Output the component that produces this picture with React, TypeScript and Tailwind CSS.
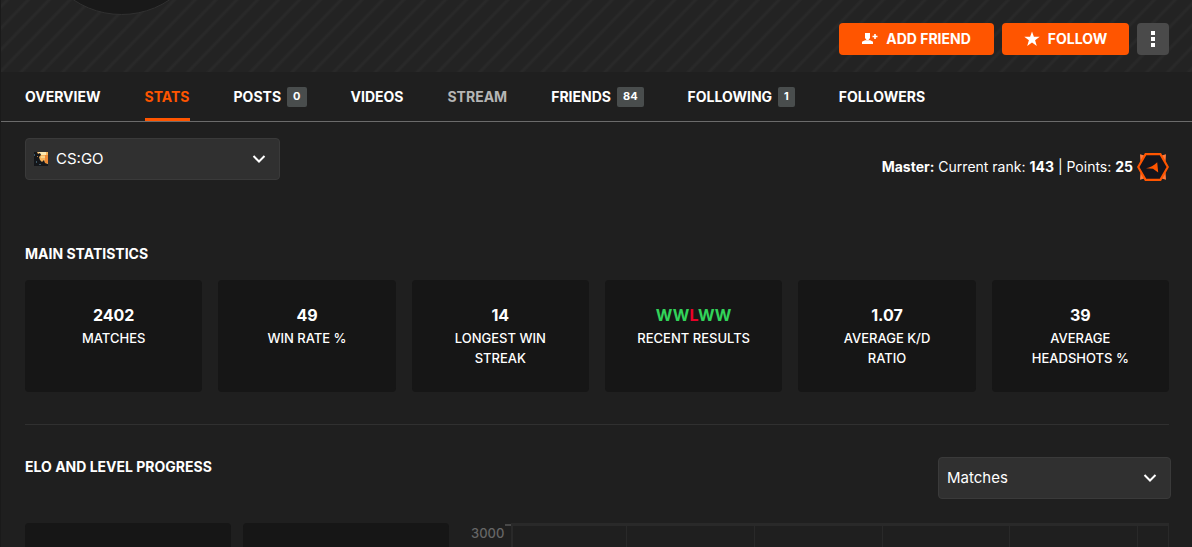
import React from "react";

type Tab = { label: string; count?: number; active?: boolean; muted?: boolean };

const tabs: Tab[] = [
  { label: "OVERVIEW" },
  { label: "STATS", active: true },
  { label: "POSTS", count: 0 },
  { label: "VIDEOS" },
  { label: "STREAM", muted: true },
  { label: "FRIENDS", count: 84 },
  { label: "FOLLOWING", count: 1 },
  { label: "FOLLOWERS" },
];

const stats: { value: string; label: string }[] = [
  { value: "2402", label: "MATCHES" },
  { value: "49", label: "WIN RATE %" },
  { value: "14", label: "LONGEST WIN STREAK" },
  { value: "WWLWW", label: "RECENT RESULTS" },
  { value: "1.07", label: "AVERAGE K/D RATIO" },
  { value: "39", label: "AVERAGE HEADSHOTS %" },
];

function Chevron() {
  return (
    <svg viewBox="0 0 14 9" className="pointer-events-none absolute top-1/2 right-3.5 h-[9px] w-3.5 -translate-y-1/2" aria-hidden="true">
      <path d="M1.5 1.5 7 7l5.500-5.500" fill="none" stroke="#fff" strokeWidth="2" />
    </svg>
  );
}

function GameArt() {
  return (
    <svg viewBox="0 0 14 14" className="pointer-events-none absolute top-1/2 left-[9px] size-3.5 -translate-y-1/2" aria-hidden="true">
      <rect width="14" height="14" fill="#f6b45c" />
      <path d="M4 0h8v3H7z" fill="#fde9b0" />
      <path d="M11 3h3v8h-3z" fill="#ef8a35" />
      <path d="M7 4h4v2H7z" fill="#fbd489" />
      <path d="M0 0h3l1 2 2-1 1 2-2 2 1 3 2 2 2-2 1 3 3 1v2H0z" fill="#14161a" />
      <path d="M0 2h1v2H0zM2 9h1v2H2zM5 12h2v1H5z" fill="#3b5664" />
      <path d="M3 4h1v1H3z" fill="#b57b42" />
    </svg>
  );
}

function RankBadge() {
  return (
    <svg viewBox="0 0 32 28" className="h-7 w-8 shrink-0" aria-hidden="true">
      <path d="M3 1.200l6 1.800-5.500 6zM29 1.200l-6 1.800 5.500 6zM3 26.800l6-1.800-5.500-6zM29 26.800l-6-1.800 5.500-6z" fill="#ff7a3c" />
      <path d="M8.600 1.200h14.800L30.800 14l-7.400 12.800H8.600L1.200 14z" fill="#14141b" stroke="#ff5500" strokeWidth="2.2" />
      <path d="M9 15.200c4-.8 8-2.600 11.200-6l1 10.400-5.200-3.800z" fill="#ff5500" />
    </svg>
  );
}

function Results({ value }: { value: string }) {
  return (
    <>
      {value.split("").map((c, i) => (
        <span key={i} className={c === "W" ? "text-[#32d35a]" : "text-[#e80128]"}>
          {c}
        </span>
      ))}
    </>
  );
}

export default function App() {
  return (
    <div className="flex h-screen flex-col overflow-hidden border-l border-[#1a1a1a] bg-[#1f1f1f] font-['Inter','Liberation_Sans',sans-serif] text-sm text-white">
      <header className="relative flex h-18 shrink-0 items-start justify-end gap-2 overflow-hidden bg-[repeating-linear-gradient(134deg,#232323_0px,#232323_2px,#292929_4px,#292929_5px,#232323_7px,#232323_15px)] pt-[23px] pr-[23px]">
        <div className="absolute -top-[158px] left-[34px] size-[173px] rounded-full border border-[#303030] bg-[#191919]" />
        <button className="flex h-8 w-[155px] items-center justify-center gap-2 rounded bg-[#ff5500] font-bold">
          <svg viewBox="0 0 16 12" className="h-3 w-4" fill="#fff" aria-hidden="true">
            <path d="M3 0h5v5L6.500 7h-2L3 5zM0 11V8.800C1 7.700 3 7.200 4 7.200h3c1.500 0 3 .6 4 1.600V11z" />
            <path d="M12.200 1h1.600v1.700h1.700v1.600h-1.700V6h-1.600V4.300h-1.700V2.700h1.700z" />
          </svg>
          ADD FRIEND
        </button>
        <button className="flex h-8 w-[127px] items-center justify-center gap-2 rounded bg-[#ff5500] font-bold">
          <svg viewBox="0 0 16 16" className="size-4" fill="#fff" aria-hidden="true">
            <path d="M8 .4l1.900 5.400h5.800l-4.600 3.500 1.700 5.700L8 11.600 3.200 15l1.700-5.700L.3 5.800h5.800z" />
          </svg>
          FOLLOW
        </button>
        <button aria-label="More options" className="flex h-8 w-8 flex-col items-center justify-center gap-0.5 rounded bg-[#4a4a4a]">
          <span className="size-1 bg-white" />
          <span className="size-1 bg-white" />
          <span className="size-1 bg-white" />
        </button>
      </header>

      <nav className="flex h-[50px] shrink-0 gap-11 border-b border-[#6b6b6b] pl-6 font-bold">
        {tabs.map((t) => (
          <a
            key={t.label}
            href="#"
            className={
              t.active
                ? "flex items-center border-b-3 border-[#ff5500] pt-[3px] text-[#ff5500]"
                : t.muted
                  ? "flex items-center text-[#b5b5b5]"
                  : "flex items-center"
            }
          >
            {t.label}
            {t.count !== undefined && (
              <span className="ml-1.5 flex h-5 items-center rounded-xs bg-[#494d4d] px-1.5 text-[11px]">{t.count}</span>
            )}
          </a>
        ))}
      </nav>

      <main className="flex min-h-0 flex-1 flex-col pt-4 pr-[23px] pl-6">
        <div className="flex shrink-0 items-start justify-between">
          <div className="relative w-[255px]">
            <GameArt />
            <select aria-label="Game" className="block h-[42px] w-full appearance-none rounded border border-[#3a3a3a] bg-[#303030] pl-[30px] text-[15px] text-white">
              <option>CS:GO</option>
            </select>
            <Chevron />
          </div>
          <div className="flex items-center gap-1 pt-[15px]">
            <p>
              <b>Master:</b> Current rank: <b>143</b> | Points: <b>25</b>
            </p>
            <RankBadge />
          </div>
        </div>

        <h2 className="mt-[63px] shrink-0 leading-5 font-bold">MAIN STATISTICS</h2>
        <section className="mt-4 grid shrink-0 grid-cols-6 gap-4">
          {stats.map((s) => (
            <div key={s.label} className="h-28 rounded bg-[#161616] px-8 pt-[25px] text-center">
              <div className="text-base leading-5 font-bold">
                {s.value === "WWLWW" ? <Results value={s.value} /> : s.value}
              </div>
              <div className="mt-[3px] text-[13px] leading-5 font-medium">{s.label}</div>
            </div>
          ))}
        </section>
        <hr className="mt-8 shrink-0 border-[#303030]" />

        <div className="mt-8 flex shrink-0 items-start justify-between">
          <h2 className="leading-5 font-bold">ELO AND LEVEL PROGRESS</h2>
          <div className="relative -mr-0.5 w-[233px]">
            <select aria-label="Progress range" className="block h-[42px] w-full appearance-none rounded border border-[#3a3a3a] bg-[#303030] pl-2 text-[15px] text-white">
              <option>Matches</option>
            </select>
            <Chevron />
          </div>
        </div>

        <section className="mt-6 flex min-h-0 flex-1 items-stretch">
          <div className="mr-3 w-[206px] rounded-t bg-[#161616]" />
          <div className="w-[206px] rounded-t bg-[#161616]" />
          <div className="ml-[22px] w-8 text-[13px] leading-5 font-medium text-[#666666]">3000</div>
          <div className="mt-px ml-0.5 h-0.5 w-1.5 bg-[#484848]" />
          <div className="flex flex-1 border-t-3 border-l-2 border-[#292929]">
            <div className="flex-[114] border-r border-[#292929]" />
            <div className="flex-[128] border-r border-[#292929]" />
            <div className="flex-[128] border-r border-[#292929]" />
            <div className="flex-[128] border-r border-[#292929]" />
            <div className="flex-[128] border-r border-[#292929]" />
            <div className="flex-[30] border-r border-[#292929]" />
          </div>
        </section>
      </main>
    </div>
  );
}
